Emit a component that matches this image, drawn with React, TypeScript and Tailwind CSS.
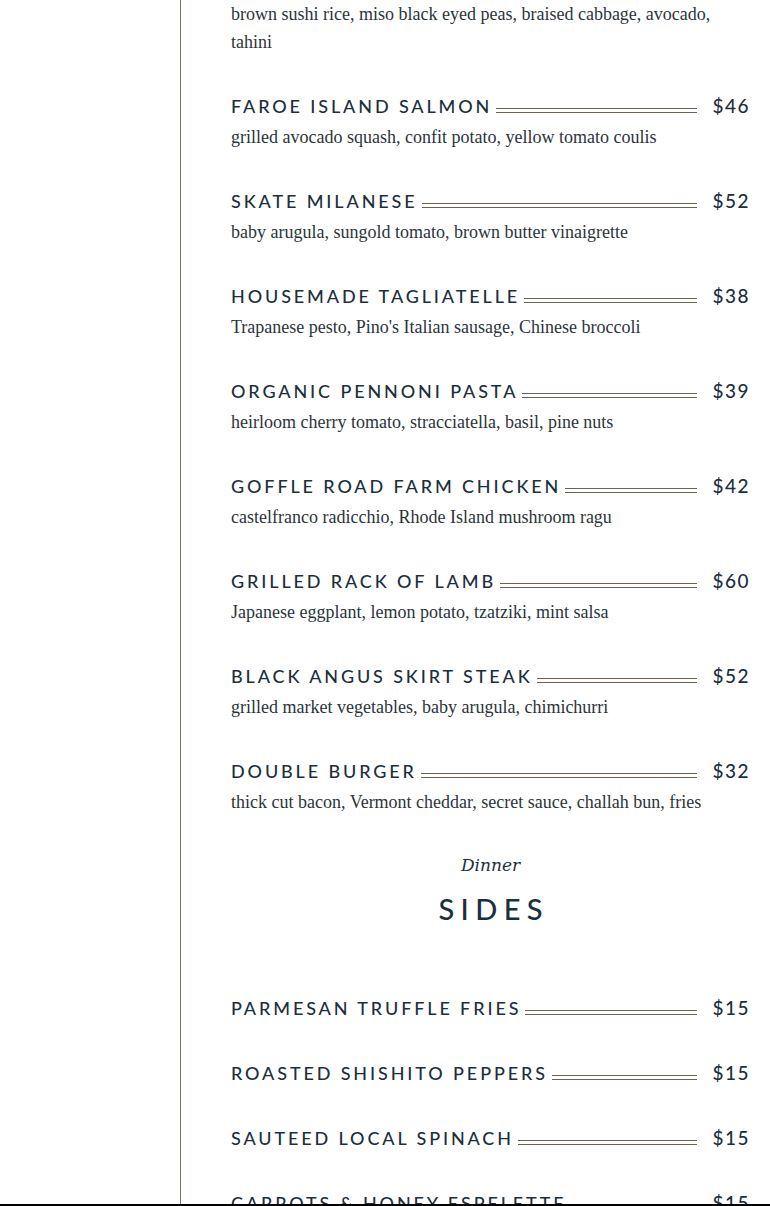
const mains = [
  { name: "Faroe Island Salmon", price: "$46", desc: "grilled avocado squash, confit potato, yellow tomato coulis" },
  { name: "Skate Milanese", price: "$52", desc: "baby arugula, sungold tomato, brown butter vinaigrette" },
  { name: "Housemade Tagliatelle", price: "$38", desc: "Trapanese pesto, Pino's Italian sausage, Chinese broccoli" },
  { name: "Organic Pennoni Pasta", price: "$39", desc: "heirloom cherry tomato, stracciatella, basil, pine nuts" },
  { name: "Goffle Road Farm Chicken", price: "$42", desc: "castelfranco radicchio, Rhode Island mushroom ragu" },
  { name: "Grilled Rack of Lamb", price: "$60", desc: "Japanese eggplant, lemon potato, tzatziki, mint salsa" },
  { name: "Black Angus Skirt Steak", price: "$52", desc: "grilled market vegetables, baby arugula, chimichurri" },
  { name: "Double Burger", price: "$32", desc: "thick cut bacon, Vermont cheddar, secret sauce, challah bun, fries" },
];

const sides = [
  { name: "Parmesan Truffle Fries", price: "$15" },
  { name: "Roasted Shishito Peppers", price: "$15" },
  { name: "Sauteed Local Spinach", price: "$15" },
  { name: "Carrots & Honey Espelette", price: "$15" },
];

function TitleRow({ name, price }: { name: string; price: string }) {
  return (
    <div className="flex h-[23px] items-center">
      <span className="whitespace-nowrap font-['Lato',sans-serif] text-[18px] font-medium uppercase tracking-[0.16em] text-[#1d2f3d]">
        {name}
      </span>
      <div className="ml-[4px] mr-[15px] mt-[7px] h-[5px] flex-1 border-y border-[#6b6252]" />
      <span className="font-['Lato',sans-serif] text-[19px] font-medium tracking-[0.08em] text-[#1d2f3d]">
        {price}
      </span>
    </div>
  );
}

export default function App() {
  return (
    <div className="flex h-[1206px] overflow-hidden border-b-2 border-black bg-white">
      <div className="w-[181px] shrink-0 border-r border-[#7d6f5a]" />
      <div className="w-[519px] shrink-0 pl-[50px] box-content">
        <p className="font-['Liberation_Serif',serif] text-[18px] leading-[28px] text-[#2c353b]">
          brown sushi rice, miso black eyed peas, braised cabbage, avocado,
          <br />
          tahini
        </p>

        {mains.map((m) => (
          <div key={m.name} className="mt-[39px]">
            <TitleRow name={m.name} price={m.price} />
            <p className="mt-[5px] font-['Liberation_Serif',serif] text-[18px] leading-[28px] text-[#2c353b]">
              {m.desc}
            </p>
          </div>
        ))}

        <div className="mt-[37px] flex flex-col items-center">
          <span className="font-['DejaVu_Serif',serif] text-[17px] italic leading-6 text-[#1d2f3d]">
            Dinner
          </span>
          <h2 className="mt-[14px] pl-[0.22em] font-['Lato',sans-serif] text-[29px] font-medium leading-9 tracking-[0.22em] text-[#1d2f3d]">
            SIDES
          </h2>
        </div>

        <div className="mt-[70px] flex flex-col gap-[42px]">
          {sides.map((s) => (
            <TitleRow key={s.name} name={s.name} price={s.price} />
          ))}
        </div>
      </div>
    </div>
  );
}
